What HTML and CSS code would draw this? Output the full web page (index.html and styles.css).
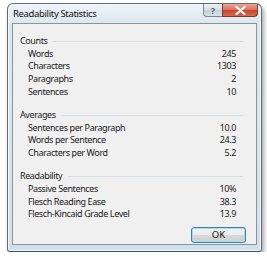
FILE: index.html
```html
<!DOCTYPE html>
<html>
<head>
<meta charset="utf-8">
<link rel="stylesheet" href="styles.css">
</head>
<body>
<div class="window">
  <div class="titlebar">
    <span class="title">Readability Statistics</span>
    <div class="caption-buttons">
      <div class="cbtn help">?</div>
      <div class="cbtn close"><svg width="11" height="9" viewBox="0 0 11 9"><path d="M1.5 1 L9.5 8 M9.5 1 L1.5 8" stroke="#fff" stroke-width="2.2" stroke-linecap="round"/></svg></div>
    </div>
  </div>
  <div class="client">
    <div class="section">
      <div class="header"><span>Counts</span><i class="rule"></i></div>
      <div class="row"><span>Words</span><span>245</span></div>
      <div class="row"><span>Characters</span><span>1303</span></div>
      <div class="row"><span>Paragraphs</span><span>2</span></div>
      <div class="row"><span>Sentences</span><span>10</span></div>
    </div>
    <div class="section">
      <div class="header"><span>Averages</span><i class="rule"></i></div>
      <div class="row"><span>Sentences per Paragraph</span><span>10.0</span></div>
      <div class="row"><span>Words per Sentence</span><span>24.3</span></div>
      <div class="row"><span>Characters per Word</span><span>5.2</span></div>
    </div>
    <div class="section">
      <div class="header"><span>Readability</span><i class="rule"></i></div>
      <div class="row"><span>Passive Sentences</span><span>10%</span></div>
      <div class="row"><span>Flesch Reading Ease</span><span>38.3</span></div>
      <div class="row"><span>Flesch-Kincaid Grade Level</span><span>13.9</span></div>
    </div>
    <div class="actions"><button class="ok">OK</button></div>
  </div>
</div>
</body>
</html>
```
FILE: styles.css
```css
html, body {
  margin: 0;
  padding: 0;
  background: #ffffff;
}
body {
  padding: 3px 0 0 7px;
  font-family: "Noto Sans", "Open Sans", sans-serif;
  color: #1a1a1a;
}
.window {
  width: 253px;
  height: 247px;
  border: 1px solid #5f6c76;
  border-bottom-color: #2c5a6a;
  border-radius: 6px 6px 3px 3px;
  background: linear-gradient(180deg, #eef3f8 0px, #dde7ef 20px, #d3e0ea 100%);
  box-shadow: 2px 3px 4px rgba(0, 0, 0, 0.35), inset 0 0 0 1px #f4f8fb;
  display: flex;
  flex-direction: column;
}
.titlebar {
  height: 19px;
  display: flex;
  align-items: flex-start;
  padding-left: 5px;
}
.title {
  font-size: 9.5px;
  line-height: 10px;
  margin-top: 5px;
  letter-spacing: -0.35px;
  color: #111;
}
.caption-buttons {
  margin-left: auto;
  margin-right: 3px;
  display: flex;
}
.cbtn {
  height: 12px;
  border: 1px solid #7a8893;
  border-top: none;
  display: flex;
  align-items: center;
  justify-content: center;
}
.help {
  width: 18px;
  border-radius: 0 0 0 4px;
  border-right: none;
  background: linear-gradient(180deg, #eef2f5 0%, #d4dde4 50%, #c3ced7 51%, #dbe3e9 100%);
  color: #5a6a78;
  font-size: 9px;
  line-height: 9px;
  font-weight: bold;
}
.close {
  width: 34px;
  border-radius: 0 0 4px 0;
  border-color: #7b3a30;
  background: linear-gradient(180deg, #e8a796 0%, #d8705a 50%, #c7452b 51%, #d86a4e 100%);
}
.client {
  flex: 1;
  margin: 0 4px 6px 4px;
  border: 1px solid #87959f;
  background: #f0f0f0;
  padding: 11px 13px 0 7px;
  font-size: 9px;
  line-height: 12.7px;
  letter-spacing: -0.4px;
  display: flex;
  flex-direction: column;
}
.section + .section {
  margin-top: 10.4px;
}
.header {
  display: flex;
  align-items: center;
  gap: 6px;
}
.rule {
  flex: 1;
  height: 1px;
  background: #d5dde3;
}
.row {
  display: flex;
  justify-content: space-between;
  padding: 0 7px 0 8px;
}
.actions {
  display: flex;
  justify-content: flex-end;
  margin-top: 6px;
  margin-right: -3px;
}
.ok {
  width: 55px;
  height: 16px;
  padding: 0;
  font-family: inherit;
  font-size: 9.5px;
  color: #111;
  border: 1px solid #3c7fb1;
  border-radius: 3px;
  background: linear-gradient(180deg, #f4f4f4 0%, #ebebeb 50%, #d9d9d9 51%, #cfcfcf 100%);
  box-shadow: inset 0 0 0 1px #a8dcf3;
}
```
